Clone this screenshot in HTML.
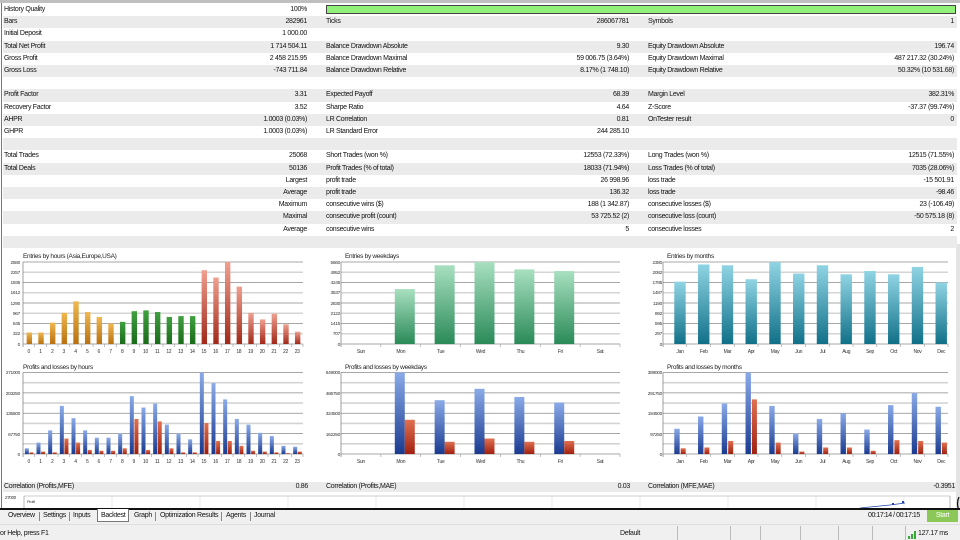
<!DOCTYPE html>
<html><head><meta charset="utf-8">
<style>
*{margin:0;padding:0;box-sizing:border-box}
body{width:960px;height:540px;overflow:hidden;background:#fff;font-family:"Liberation Sans",sans-serif;font-size:7px;color:#111;position:relative;letter-spacing:-0.3px}
.r{position:absolute;left:3px;width:954px;height:12.2px}
.g{background:#ebebeb}
.t{position:absolute;top:2px;white-space:nowrap;line-height:8px}
.v{text-align:right}
svg text{font-family:"Liberation Sans",sans-serif}
.tab{position:absolute;top:512px;font-size:7px;white-space:nowrap}
.sep{position:absolute;top:512px;width:1px;height:9px;background:#888}
</style></head><body>
<div style="position:absolute;left:0;top:0;width:960px;height:3px;background:#bfbfbf"></div>
<div style="position:absolute;left:1px;top:3px;width:1px;height:505px;background:#777"></div>
<div style="position:absolute;left:956px;top:244px;width:4px;height:264px;background:#e4e4e4"></div>

<div class="r" style="top:4px"><span class="t" style="left:1px">History Quality</span><span class="t v" style="right:650px">100%</span><div style="position:absolute;left:323px;top:1px;width:630px;height:9px;background:#90f07a;border:1px solid #444"></div></div>
<div class="r g" style="top:16.2px"><span class="t" style="left:1px">Bars</span><span class="t" style="right:650px">282961</span><span class="t" style="left:323px">Ticks</span><span class="t" style="right:328px">286067781</span><span class="t" style="left:645px">Symbols</span><span class="t" style="right:3px">1</span></div>
<div class="r" style="top:28.4px"><span class="t" style="left:1px">Initial Deposit</span><span class="t" style="right:650px">1 000.00</span></div>
<div class="r g" style="top:40.6px"><span class="t" style="left:1px">Total Net Profit</span><span class="t" style="right:650px">1 714 504.11</span><span class="t" style="left:323px">Balance Drawdown Absolute</span><span class="t" style="right:328px">9.30</span><span class="t" style="left:645px">Equity Drawdown Absolute</span><span class="t" style="right:3px">196.74</span></div>
<div class="r" style="top:52.8px"><span class="t" style="left:1px">Gross Profit</span><span class="t" style="right:650px">2 458 215.95</span><span class="t" style="left:323px">Balance Drawdown Maximal</span><span class="t" style="right:328px">59 006.75 (3.64%)</span><span class="t" style="left:645px">Equity Drawdown Maximal</span><span class="t" style="right:3px">487 217.32 (30.24%)</span></div>
<div class="r g" style="top:65px"><span class="t" style="left:1px">Gross Loss</span><span class="t" style="right:650px">-743 711.84</span><span class="t" style="left:323px">Balance Drawdown Relative</span><span class="t" style="right:328px">8.17% (1 748.10)</span><span class="t" style="left:645px">Equity Drawdown Relative</span><span class="t" style="right:3px">50.32% (10 531.68)</span></div>
<div class="r" style="top:77.2px"></div>
<div class="r g" style="top:89.4px"><span class="t" style="left:1px">Profit Factor</span><span class="t" style="right:650px">3.31</span><span class="t" style="left:323px">Expected Payoff</span><span class="t" style="right:328px">68.39</span><span class="t" style="left:645px">Margin Level</span><span class="t" style="right:3px">382.31%</span></div>
<div class="r" style="top:101.6px"><span class="t" style="left:1px">Recovery Factor</span><span class="t" style="right:650px">3.52</span><span class="t" style="left:323px">Sharpe Ratio</span><span class="t" style="right:328px">4.64</span><span class="t" style="left:645px">Z-Score</span><span class="t" style="right:3px">-37.37 (99.74%)</span></div>
<div class="r g" style="top:113.8px"><span class="t" style="left:1px">AHPR</span><span class="t" style="right:650px">1.0003 (0.03%)</span><span class="t" style="left:323px">LR Correlation</span><span class="t" style="right:328px">0.81</span><span class="t" style="left:645px">OnTester result</span><span class="t" style="right:3px">0</span></div>
<div class="r" style="top:126px"><span class="t" style="left:1px">GHPR</span><span class="t" style="right:650px">1.0003 (0.03%)</span><span class="t" style="left:323px">LR Standard Error</span><span class="t" style="right:328px">244 285.10</span></div>
<div class="r g" style="top:138.2px"></div>
<div class="r" style="top:150.4px"><span class="t" style="left:1px">Total Trades</span><span class="t" style="right:650px">25068</span><span class="t" style="left:323px">Short Trades (won %)</span><span class="t" style="right:328px">12553 (72.33%)</span><span class="t" style="left:645px">Long Trades (won %)</span><span class="t" style="right:3px">12515 (71.55%)</span></div>
<div class="r g" style="top:162.6px"><span class="t" style="left:1px">Total Deals</span><span class="t" style="right:650px">50136</span><span class="t" style="left:323px">Profit Trades (% of total)</span><span class="t" style="right:328px">18033 (71.94%)</span><span class="t" style="left:645px">Loss Trades (% of total)</span><span class="t" style="right:3px">7035 (28.06%)</span></div>
<div class="r" style="top:174.8px"><span class="t" style="right:650px">Largest</span><span class="t" style="left:323px">profit trade</span><span class="t" style="right:328px">26 998.96</span><span class="t" style="left:645px">loss trade</span><span class="t" style="right:3px">-15 501.91</span></div>
<div class="r g" style="top:187px"><span class="t" style="right:650px">Average</span><span class="t" style="left:323px">profit trade</span><span class="t" style="right:328px">136.32</span><span class="t" style="left:645px">loss trade</span><span class="t" style="right:3px">-98.46</span></div>
<div class="r" style="top:199.2px"><span class="t" style="right:650px">Maximum</span><span class="t" style="left:323px">consecutive wins ($)</span><span class="t" style="right:328px">188 (1 342.87)</span><span class="t" style="left:645px">consecutive losses ($)</span><span class="t" style="right:3px">23 (-106.49)</span></div>
<div class="r g" style="top:211.4px"><span class="t" style="right:650px">Maximal</span><span class="t" style="left:323px">consecutive profit (count)</span><span class="t" style="right:328px">53 725.52 (2)</span><span class="t" style="left:645px">consecutive loss (count)</span><span class="t" style="right:3px">-50 575.18 (8)</span></div>
<div class="r" style="top:223.6px"><span class="t" style="right:650px">Average</span><span class="t" style="left:323px">consecutive wins</span><span class="t" style="right:328px">5</span><span class="t" style="left:645px">consecutive losses</span><span class="t" style="right:3px">2</span></div>
<div class="r g" style="top:235.8px"></div>

<svg id="ch" width="960" height="250" style="position:absolute;left:0;top:245px" viewBox="0 245 960 250">
<defs>
<linearGradient id="gO" x1="0" y1="0" x2="0" y2="1"><stop offset="0" stop-color="#f0b850"/><stop offset="1" stop-color="#b87010"/></linearGradient>
<linearGradient id="gG" x1="0" y1="0" x2="0" y2="1"><stop offset="0" stop-color="#40a040"/><stop offset="1" stop-color="#1a6a1a"/></linearGradient>
<linearGradient id="gR" x1="0" y1="0" x2="0" y2="1"><stop offset="0" stop-color="#f0a090"/><stop offset="1" stop-color="#a02818"/></linearGradient>
<linearGradient id="gW" x1="0" y1="0" x2="0" y2="1"><stop offset="0" stop-color="#a8e0c0"/><stop offset="1" stop-color="#2a8a58"/></linearGradient>
<linearGradient id="gT" x1="0" y1="0" x2="0" y2="1"><stop offset="0" stop-color="#90d4e4"/><stop offset="1" stop-color="#107088"/></linearGradient>
<linearGradient id="gB" x1="0" y1="0" x2="0" y2="1"><stop offset="0" stop-color="#8aaae8"/><stop offset="1" stop-color="#1a3a90"/></linearGradient>
<linearGradient id="gL" x1="0" y1="0" x2="0" y2="1"><stop offset="0" stop-color="#e07050"/><stop offset="1" stop-color="#a02010"/></linearGradient>
</defs>
<g id="grid"></g>
<g id="bars"></g>
<g font-size="6.5" fill="#222">
<text x="23" y="258">Entries by hours (Asia,Europe,USA)</text>
<text x="23" y="369">Profits and losses by hours</text>
<text x="345" y="258">Entries by weekdays</text>
<text x="345" y="369">Profits and losses by weekdays</text>
<text x="667" y="258">Entries by months</text>
<text x="667" y="369">Profits and losses by months</text>
</g>
<g font-size="4.8" fill="#333" text-anchor="end">
<text x="20" y="264">2580</text><text x="20" y="274">2257</text><text x="20" y="284">1935</text><text x="20" y="294">1612</text><text x="20" y="305">1290</text><text x="20" y="315">967</text><text x="20" y="325">645</text><text x="20" y="335">322</text><text x="20" y="346">0</text>
<text x="20" y="374">271000</text><text x="20" y="395">203250</text><text x="20" y="415">135500</text><text x="20" y="436">67750</text><text x="20" y="456">0</text>
<text x="340" y="264">5660</text><text x="340" y="274">4952</text><text x="340" y="284">4245</text><text x="340" y="294">3537</text><text x="340" y="305">2830</text><text x="340" y="315">2122</text><text x="340" y="325">1415</text><text x="340" y="335">707</text><text x="340" y="346">0</text>
<text x="340" y="374">649000</text><text x="340" y="395">486750</text><text x="340" y="415">324500</text><text x="340" y="436">162250</text><text x="340" y="456">0</text>
<text x="662" y="264">2380</text><text x="662" y="274">2082</text><text x="662" y="284">1785</text><text x="662" y="294">1487</text><text x="662" y="305">1190</text><text x="662" y="315">892</text><text x="662" y="325">595</text><text x="662" y="335">297</text><text x="662" y="346">0</text>
<text x="662" y="374">389000</text><text x="662" y="395">291750</text><text x="662" y="415">194500</text><text x="662" y="436">97250</text><text x="662" y="456">0</text>
</g>
<g font-size="5" fill="#333" text-anchor="middle">
<text x="28.8" y="353">0</text><text x="40.5" y="353">1</text><text x="52.2" y="353">2</text><text x="63.8" y="353">3</text><text x="75.5" y="353">4</text><text x="87.2" y="353">5</text><text x="98.8" y="353">6</text><text x="110.5" y="353">7</text><text x="122.2" y="353">8</text><text x="133.8" y="353">9</text><text x="145.5" y="353">10</text><text x="157.2" y="353">11</text><text x="168.8" y="353">12</text><text x="180.5" y="353">13</text><text x="192.2" y="353">14</text><text x="203.8" y="353">15</text><text x="215.5" y="353">16</text><text x="227.2" y="353">17</text><text x="238.8" y="353">18</text><text x="250.5" y="353">19</text><text x="262.2" y="353">20</text><text x="273.8" y="353">21</text><text x="285.5" y="353">22</text><text x="297.2" y="353">23</text>
<text x="28.8" y="463">0</text><text x="40.5" y="463">1</text><text x="52.2" y="463">2</text><text x="63.8" y="463">3</text><text x="75.5" y="463">4</text><text x="87.2" y="463">5</text><text x="98.8" y="463">6</text><text x="110.5" y="463">7</text><text x="122.2" y="463">8</text><text x="133.8" y="463">9</text><text x="145.5" y="463">10</text><text x="157.2" y="463">11</text><text x="168.8" y="463">12</text><text x="180.5" y="463">13</text><text x="192.2" y="463">14</text><text x="203.8" y="463">15</text><text x="215.5" y="463">16</text><text x="227.2" y="463">17</text><text x="238.8" y="463">18</text><text x="250.5" y="463">19</text><text x="262.2" y="463">20</text><text x="273.8" y="463">21</text><text x="285.5" y="463">22</text><text x="297.2" y="463">23</text>
<text x="360.9" y="353">Sun</text><text x="400.8" y="353">Mon</text><text x="440.7" y="353">Tue</text><text x="480.5" y="353">Wed</text><text x="520.4" y="353">Thu</text><text x="560.2" y="353">Fri</text><text x="600.1" y="353">Sat</text>
<text x="360.9" y="463">Sun</text><text x="400.8" y="463">Mon</text><text x="440.7" y="463">Tue</text><text x="480.5" y="463">Wed</text><text x="520.4" y="463">Thu</text><text x="560.2" y="463">Fri</text><text x="600.1" y="463">Sat</text>
<text x="680" y="353">Jan</text><text x="703.7" y="353">Feb</text><text x="727.5" y="353">Mar</text><text x="751.2" y="353">Apr</text><text x="775" y="353">May</text><text x="798.7" y="353">Jun</text><text x="822.5" y="353">Jul</text><text x="846.2" y="353">Aug</text><text x="870" y="353">Sep</text><text x="893.7" y="353">Oct</text><text x="917.5" y="353">Nov</text><text x="941.2" y="353">Dec</text>
<text x="680" y="463">Jan</text><text x="703.7" y="463">Feb</text><text x="727.5" y="463">Mar</text><text x="751.2" y="463">Apr</text><text x="775" y="463">May</text><text x="798.7" y="463">Jun</text><text x="822.5" y="463">Jul</text><text x="846.2" y="463">Aug</text><text x="870" y="463">Sep</text><text x="893.7" y="463">Oct</text><text x="917.5" y="463">Nov</text><text x="941.2" y="463">Dec</text>
</g>
</svg>

<div style="position:absolute;left:3px;top:482px;width:954px;height:10px;background:#ebebeb"></div>
<span class="t" style="position:absolute;left:4px;top:483px">Correlation (Profits,MFE)</span>
<span class="t" style="position:absolute;right:652px;top:483px">0.86</span>
<span class="t" style="position:absolute;left:326px;top:483px">Correlation (Profits,MAE)</span>
<span class="t" style="position:absolute;right:330px;top:483px">0.03</span>
<span class="t" style="position:absolute;left:648px;top:483px">Correlation (MFE,MAE)</span>
<span class="t" style="position:absolute;right:5px;top:483px">-0.3951</span>

<svg width="960" height="20" style="position:absolute;left:0;top:493px">
<line x1="24" y1="3" x2="950" y2="3" stroke="#999" stroke-width="0.6"/>
<g stroke="#ddd" stroke-width="0.6"><line x1="112" y1="3" x2="112" y2="16"/><line x1="200" y1="3" x2="200" y2="16"/><line x1="288" y1="3" x2="288" y2="16"/><line x1="376" y1="3" x2="376" y2="16"/><line x1="464" y1="3" x2="464" y2="16"/><line x1="552" y1="3" x2="552" y2="16"/><line x1="640" y1="3" x2="640" y2="16"/><line x1="728" y1="3" x2="728" y2="16"/><line x1="816" y1="3" x2="816" y2="16"/><line x1="904" y1="3" x2="904" y2="16"/></g>
<line x1="24" y1="3" x2="24" y2="16" stroke="#888" stroke-width="0.6"/>
<line x1="950" y1="3" x2="950" y2="16" stroke="#888" stroke-width="0.6"/>
<text x="5" y="6" font-size="4.5" fill="#333">27000</text>
<text x="27" y="10" font-size="4" fill="#333">Profit</text>
<path d="M860 15 L890 12 L905 10" stroke="#2244aa" stroke-width="0.8" fill="none"/>
<rect x="892" y="10" width="2" height="2" fill="#2244aa"/><rect x="902" y="8" width="2" height="2" fill="#2244aa"/>
<path d="M959 4 Q956 10 959 18" stroke="#111" stroke-width="1.3" fill="none"/>
</svg>
<div style="position:absolute;left:0;top:508px;width:960px;height:1.5px;background:#111"></div>
<div style="position:absolute;left:0;top:509.5px;width:960px;height:14px;background:#f0f0f0"></div>
<div style="position:absolute;left:97px;top:509px;width:32px;height:13px;background:#fff;border:1px solid #777;border-top:none"></div>
<span class="tab" style="left:8px">Overview</span><div class="sep" style="left:39px"></div>
<span class="tab" style="left:43px">Settings</span><div class="sep" style="left:69px"></div>
<span class="tab" style="left:73px">Inputs</span>
<span class="tab" style="left:101px">Backtest</span>
<span class="tab" style="left:134px">Graph</span><div class="sep" style="left:155px"></div>
<span class="tab" style="left:160px">Optimization Results</span><div class="sep" style="left:221px"></div>
<span class="tab" style="left:226px">Agents</span><div class="sep" style="left:250px"></div>
<span class="tab" style="left:254px">Journal</span>
<span class="tab" style="left:868px;letter-spacing:-0.45px">00:17:14 / 00:17:15</span>
<div style="position:absolute;left:927px;top:510px;width:31px;height:12px;background:#8cc858;color:#fff;text-align:center;line-height:12px">Start</div>
<div style="position:absolute;left:0;top:524px;width:960px;height:16px;background:#f0f0f0;border-top:1px solid #ddd"></div>
<span class="t" style="position:absolute;left:0;top:530px">or Help, press F1</span>
<span class="t" style="position:absolute;left:620px;top:530px">Default</span>
<div style="position:absolute;left:677px;top:526px;width:1px;height:14px;background:#bbb"></div>
<div style="position:absolute;left:730px;top:526px;width:1px;height:14px;background:#bbb"></div>
<div style="position:absolute;left:760px;top:526px;width:1px;height:14px;background:#bbb"></div>
<div style="position:absolute;left:800px;top:526px;width:1px;height:14px;background:#bbb"></div>
<div style="position:absolute;left:838px;top:526px;width:1px;height:14px;background:#bbb"></div>
<div style="position:absolute;left:872px;top:526px;width:1px;height:14px;background:#bbb"></div>
<div style="position:absolute;left:905px;top:526px;width:1px;height:14px;background:#bbb"></div>
<svg width="10" height="8" style="position:absolute;left:908px;top:531px"><rect x="0" y="5" width="2" height="3" fill="#3a3"/><rect x="3" y="3" width="2" height="5" fill="#3a3"/><rect x="6" y="0" width="2" height="8" fill="#3a3"/></svg>
<span class="t" style="position:absolute;left:918px;top:530px">127.17 ms</span>

<script>
var NS="http://www.w3.org/2000/svg",grid=document.getElementById('grid'),bars=document.getElementById('bars');
function el(p,tag,a){var e=document.createElementNS(NS,tag);for(var k in a)e.setAttribute(k,a[k]);p.appendChild(e);}
function frame(x0,x1,top,bot,n,step){
 for(var i=0;i<=8;i++){var y=top+(bot-top)*i/8;el(grid,'line',{x1:x0,x2:x1,y1:y,y2:y,stroke:i%2?'#d4d4d4':'#8a8a8a','stroke-width':i%2?1.6:0.7});}
 el(grid,'line',{x1:x0,x2:x0,y1:top,y2:bot+3,stroke:'#777','stroke-width':0.7});
 for(var j=0;j<=n;j++){var x=x0+step*j;el(grid,'line',{x1:x,x2:x,y1:bot,y2:bot+3,stroke:'#999','stroke-width':0.6});}
}
function bar(x,w,f,top,bot,fill){var h=(bot-top)*f;el(bars,'rect',{x:x,y:bot-h,width:w,height:h,fill:fill});}
var s=280/24;frame(23,303,262,344,24,s);frame(23,303,372.5,454,24,s);
var he=[.14,.14,.26,.38,.52,.39,.33,.25,.27,.40,.41,.39,.33,.34,.34,.90,.81,1,.70,.38,.30,.37,.24,.15];
var hb=[.07,.14,.29,.59,.44,.29,.2,.2,.25,.71,.57,.62,.36,.25,.18,1,.87,.67,.43,.36,.26,.22,.1,.09];
var hr=[.02,.03,.02,.19,.14,.05,.04,.04,.07,.43,.05,.4,.07,.02,.02,.38,.16,.16,.1,.04,.03,.02,.01,.03];
for(var i=0;i<24;i++){var c=23+s*(i+.5);bar(c-2.2,5.4,he[i],262,344,i<8?'url(#gO)':i<15?'url(#gG)':'url(#gR)');
 bar(c-4,4,hb[i],372.5,454,'url(#gB)');bar(c+.6,4,hr[i],372.5,454,'url(#gL)');}
var s2=279/7;frame(341,620,262,344,7,s2);frame(341,620,372.5,454,7,s2);
var we=[0,.67,.96,1,.91,.89,0],wb=[0,1,.66,.8,.7,.63,0],wr=[0,.42,.15,.19,.15,.16,0];
for(i=0;i<7;i++){c=341+s2*(i+.5);if(we[i]){bar(c-6,20,we[i],262,344,'url(#gW)');bar(c-6,10,wb[i],372.5,454,'url(#gB)');bar(c+4,10,wr[i],372.5,454,'url(#gL)');}}
var s3=285/12;frame(663,948,262,344,12,s3);frame(663,948,372.5,454,12,s3);
var me=[.76,.97,.96,.79,1,.86,.96,.85,.89,.85,.94,.75],mb=[.31,.46,.62,1,.59,.25,.43,.5,.3,.6,.75,.58],mr=[.07,.08,.16,.67,.14,.03,.08,.08,.04,.17,.16,.14];
for(i=0;i<12;i++){c=663+s3*(i+.5);bar(c-.6,11.4,me[i],262,344,'url(#gT)');bar(c-.6,5.4,mb[i],372.5,454,'url(#gB)');bar(c+5.8,5,mr[i],372.5,454,'url(#gL)');}
</script>
</body></html>
